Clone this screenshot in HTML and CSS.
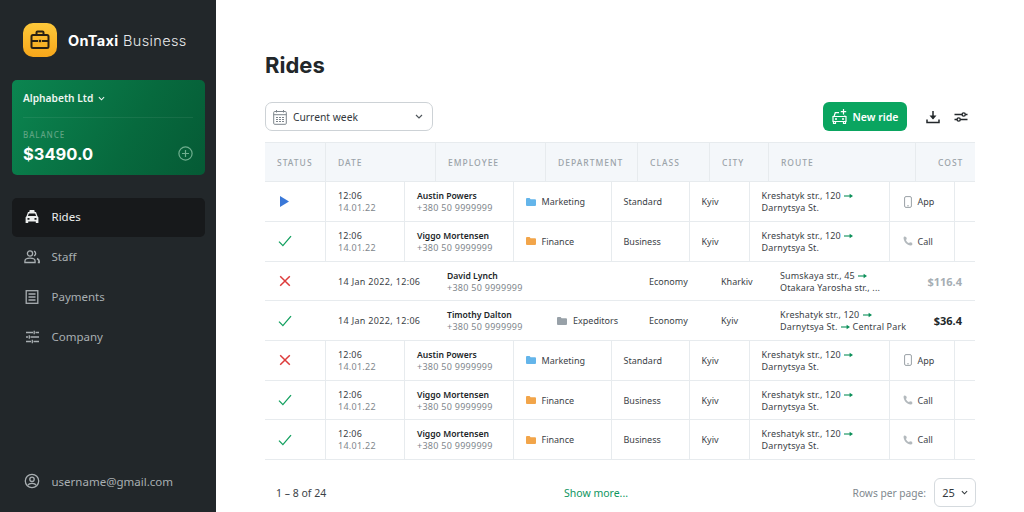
FILE: index.html
```html
<!DOCTYPE html>
<html lang="en">
<head>
<meta charset="utf-8">
<title>Rides</title>
<link rel="stylesheet" href="styles.css">
</head>
<body>
<svg class="defs" width="0" height="0" aria-hidden="true">
  <symbol id="folder" viewBox="0 0 10 8"><path d="M0 1a1 1 0 0 1 1-1h2.6l1 1.2H9a1 1 0 0 1 1 1V7a1 1 0 0 1-1 1H1a1 1 0 0 1-1-1z" fill="currentColor"/></symbol>
  <symbol id="check" viewBox="0 0 14 12"><path d="M1 6.600 4.900 10.600 13 1.200" fill="none" stroke="currentColor" stroke-width="1.300"/></symbol>
  <symbol id="cross" viewBox="0 0 12 12"><path d="M1.200 1.200 10.800 10.800M10.800 1.200 1.200 10.800" fill="none" stroke="currentColor" stroke-width="1.500"/></symbol>
  <symbol id="play" viewBox="0 0 9 11"><path d="M0 0 9 5.500 0 11z" fill="currentColor"/></symbol>
  <symbol id="arrow" viewBox="0 0 9 6"><path d="M0 3h7" stroke="currentColor" stroke-width="1.100"/><path d="M5.600 .8 9 3 5.600 5.200z" fill="currentColor"/></symbol>
  <symbol id="phone" viewBox="0 0 10 10"><path d="M1.400 .6 3.200 .9 3.800 3 2.900 3.900C3.500 5.300 4.700 6.500 6.100 7.100L7 6.200 9.100 6.800 9.400 8.600C9 9.300 8.300 9.500 7.600 9.400 4 8.900 1.100 6 .6 2.400.5 1.700.7 1 1.400 .6z" fill="currentColor"/></symbol>
  <symbol id="mobile" viewBox="0 0 8 12"><rect x=".6" y=".6" width="6.800" height="10.800" rx="1.400" fill="none" stroke="currentColor" stroke-width="1"/><path d="M3 9.800h2" stroke="currentColor" stroke-width=".8"/></symbol>
  <symbol id="chev" viewBox="0 0 8 5"><path d="M1 1 4 4 7 1" fill="none" stroke="currentColor" stroke-width="1.200"/></symbol>
</svg>

<div class="app">
  <aside class="sidebar">
    <div class="brand">
      <div class="brand-logo">
        <svg width="22" height="22" viewBox="0 0 22 22" fill="none" stroke="#2a2113" stroke-width="2"><path d="M7.500 6V3.600a1 1 0 0 1 1-1h5a1 1 0 0 1 1 1V6"/><rect x="2.500" y="6" width="17" height="13" rx="1.500"/><path d="M2.500 12H9M13 12h6.500"/><rect x="9.800" y="10.800" width="2.400" height="2.400" fill="#2a2113" stroke="none"/></svg>
      </div>
      <div class="brand-name"><b>OnTaxi</b> Business</div>
    </div>
    <div class="balance">
      <div class="company">Alphabeth Ltd <svg class="company-chev" width="7" height="5"><use href="#chev"/></svg></div>
      <div class="balance-label">BALANCE</div>
      <div class="balance-row">
        <div class="balance-sum">$3490.0</div>
        <svg width="15" height="15" viewBox="0 0 15 15" fill="none" stroke="#6fae8e" stroke-width="1.200"><circle cx="7.500" cy="7.500" r="6.600"/><path d="M7.500 4v7M4 7.500h7"/></svg>
      </div>
    </div>
    <nav class="nav">
      <a class="nav-item active">
        <svg class="nav-icon" viewBox="0 0 16 16"><path fill="currentColor" d="M5.700 1h4.600l.4 2H12l1.500 4.300.9 1V14h-2.600v-1.500H4.200V14H1.600V8.300l.9-1L4 3h1.300zM4.900 4.500 3.900 7h8.200l-1-2.500zM3.500 9v1.800h2V9zm7 0v1.800h2V9z"/></svg>
        Rides
      </a>
      <a class="nav-item">
        <svg class="nav-icon" viewBox="0 0 16 16" fill="none" stroke="currentColor" stroke-width="1.300"><circle cx="6" cy="4.500" r="2.600"/><path d="M.9 13.500v-1.300c0-1.900 2-3 5.100-3s5.100 1.100 5.100 3v1.300z"/><path d="M10 2.200a2.500 2.500 0 0 1 0 4.700"/><path d="M13 9.400c1.300.6 2.100 1.500 2.100 2.800v1.300h-1.300" stroke-width="1.700"/></svg>
        Staff
      </a>
      <a class="nav-item">
        <svg class="nav-icon" viewBox="0 0 16 16" fill="none" stroke="currentColor" stroke-width="1.300"><rect x="2.200" y="1.700" width="11.600" height="12.600"/><path d="M4.500 5h7M4.500 8h7M4.500 11h7"/></svg>
        Payments
      </a>
      <a class="nav-item">
        <svg class="nav-icon" viewBox="0 0 16 16" fill="none" stroke="currentColor" stroke-width="1.300"><path d="M2 3.500h7M11.500 3.500H15M2 8h2M6.500 8H15M2 12.500h5M9.500 12.500H15M10.200 1.800v3.500M5.300 6.200v3.600M8.300 10.700v3.600"/></svg>
        Company
      </a>
    </nav>
    <div class="user">
      <svg class="nav-icon" viewBox="0 0 16 16" fill="none" stroke="currentColor" stroke-width="1.300"><circle cx="8" cy="8" r="6.700"/><circle cx="8" cy="6.300" r="2.200"/><path d="M4 12.300c.5-1.500 2-2 4-2s3.500.5 4 2"/></svg>
      username@gmail.com
    </div>
  </aside>

  <main class="main">
    <h1 class="title">Rides</h1>
    <div class="toolbar">
      <div class="period">
        <svg class="period-icon" width="14" height="16" viewBox="0 0 14 16" fill="none" stroke="#7d858c" stroke-width="1"><rect x=".7" y="2.500" width="12.600" height="12.800" rx="1"/><path d="M.7 5.700h12.600M3.500 1v2.500M10.500 1v2.500M3 8.500h2M6 8.500h2M9 8.500h2M3 10.500h2M6 10.500h2M9 10.500h2M3 12.500h2M6 12.500h2M9 12.500h2"/></svg>
        <span class="period-text">Current week</span>
        <svg class="chev" width="8" height="5"><use href="#chev"/></svg>
      </div>
      <div class="actions">
        <button class="new-ride">
          <svg width="15" height="15" viewBox="0 0 15 15" fill="none" stroke="#fff" stroke-width="1.200"><path d="M11.500 0v5.500M8.800 2.700h5.400"/><path d="M7 3.700H3.300L2 7.500"/><path d="M12.800 6.500V7.500"/><path d="M1 7.500h13v5H1zM1.500 12.500v2h2v-2M11.500 12.500v2h2v-2"/><path d="M3 10h2M10 10h2" stroke-width="1.500"/></svg>
          New ride
        </button>
        <svg class="tool" width="14" height="14" viewBox="0 0 14 14" fill="none" stroke="#22272a" stroke-width="1.500"><path d="M7 1v7.500"/><path d="M3.500 5.500h7L7 9.500z" fill="#22272a" stroke="none"/><path d="M1 9.500v3h12v-3"/></svg>
        <svg class="tool" width="14" height="14" viewBox="0 0 14 14" fill="none" stroke="#22272a" stroke-width="1.400"><path d="M.5 4.500h7.500M11.500 4.500H13.500M.5 9.500h2.500M6.500 9.500H13.500"/><circle cx="9.700" cy="4.500" r="1.600"/><circle cx="4.700" cy="9.500" r="1.600"/></svg>
      </div>
    </div>

    <div class="table">
      <div class="thead">
        <div class="th">STATUS</div><div class="th">DATE</div><div class="th">EMPLOYEE</div><div class="th">DEPARTMENT</div><div class="th">CLASS</div><div class="th">CITY</div><div class="th">ROUTE</div><div class="th th-cost">COST</div>
      </div>

      <div class="row">
        <div class="td st"><svg class="i-play" width="9" height="11"><use href="#play"/></svg></div>
        <div class="td two"><span class="dark">12:06</span><span class="muted">14.01.22</span></div>
        <div class="td two"><b>Austin Powers</b><span class="muted">+380 50 9999999</span></div>
        <div class="td dept"><svg class="f-blue" width="10" height="8"><use href="#folder"/></svg>Marketing</div>
        <div class="td">Standard</div>
        <div class="td">Kyiv</div>
        <div class="td two route"><span>Kreshatyk str., 120 <svg class="arrow" width="9" height="6"><use href="#arrow"/></svg></span><span>Darnytsya St.</span></div>
        <div class="td src"><svg class="i-mobile" width="10" height="12"><use href="#mobile"/></svg>App</div>
        <div class="td"></div>
      </div>

      <div class="row">
        <div class="td st"><svg class="i-ok" width="14" height="12"><use href="#check"/></svg></div>
        <div class="td two"><span class="dark">12:06</span><span class="muted">14.01.22</span></div>
        <div class="td two"><b>Viggo Mortensen</b><span class="muted">+380 50 9999999</span></div>
        <div class="td dept"><svg class="f-orange" width="10" height="8"><use href="#folder"/></svg>Finance</div>
        <div class="td">Business</div>
        <div class="td">Kyiv</div>
        <div class="td two route"><span>Kreshatyk str., 120 <svg class="arrow" width="9" height="6"><use href="#arrow"/></svg></span><span>Darnytsya St.</span></div>
        <div class="td src"><svg class="i-phone" width="10" height="10"><use href="#phone"/></svg>Call</div>
        <div class="td"></div>
      </div>

      <div class="row wide">
        <div class="td st"><svg class="i-no" width="12" height="12"><use href="#cross"/></svg></div>
        <div class="td stamp">14 Jan 2022, 12:06</div>
        <div class="td two"><b>David Lynch</b><span class="muted">+380 50 9999999</span></div>
        <div class="td dept"></div>
        <div class="td">Economy</div>
        <div class="td">Kharkiv</div>
        <div class="td two route"><span>Sumskaya str., 45 <svg class="arrow" width="9" height="6"><use href="#arrow"/></svg></span><span>Otakara Yarosha str., ...</span></div>
        <div class="td cost cost-off">$116.4</div>
      </div>

      <div class="row wide">
        <div class="td st"><svg class="i-ok" width="14" height="12"><use href="#check"/></svg></div>
        <div class="td stamp">14 Jan 2022, 12:06</div>
        <div class="td two"><b>Timothy Dalton</b><span class="muted">+380 50 9999999</span></div>
        <div class="td dept"><svg class="f-gray" width="10" height="8"><use href="#folder"/></svg>Expeditors</div>
        <div class="td">Economy</div>
        <div class="td">Kyiv</div>
        <div class="td two route"><span>Kreshatyk str., 120 <svg class="arrow" width="9" height="6"><use href="#arrow"/></svg></span><span>Darnytsya St. <svg class="arrow" width="9" height="6"><use href="#arrow"/></svg> Central Park</span></div>
        <div class="td cost">$36.4</div>
      </div>

      <div class="row">
        <div class="td st"><svg class="i-no" width="12" height="12"><use href="#cross"/></svg></div>
        <div class="td two"><span class="dark">12:06</span><span class="muted">14.01.22</span></div>
        <div class="td two"><b>Austin Powers</b><span class="muted">+380 50 9999999</span></div>
        <div class="td dept"><svg class="f-blue" width="10" height="8"><use href="#folder"/></svg>Marketing</div>
        <div class="td">Standard</div>
        <div class="td">Kyiv</div>
        <div class="td two route"><span>Kreshatyk str., 120 <svg class="arrow" width="9" height="6"><use href="#arrow"/></svg></span><span>Darnytsya St.</span></div>
        <div class="td src"><svg class="i-mobile" width="10" height="12"><use href="#mobile"/></svg>App</div>
        <div class="td"></div>
      </div>

      <div class="row">
        <div class="td st"><svg class="i-ok" width="14" height="12"><use href="#check"/></svg></div>
        <div class="td two"><span class="dark">12:06</span><span class="muted">14.01.22</span></div>
        <div class="td two"><b>Viggo Mortensen</b><span class="muted">+380 50 9999999</span></div>
        <div class="td dept"><svg class="f-orange" width="10" height="8"><use href="#folder"/></svg>Finance</div>
        <div class="td">Business</div>
        <div class="td">Kyiv</div>
        <div class="td two route"><span>Kreshatyk str., 120 <svg class="arrow" width="9" height="6"><use href="#arrow"/></svg></span><span>Darnytsya St.</span></div>
        <div class="td src"><svg class="i-phone" width="10" height="10"><use href="#phone"/></svg>Call</div>
        <div class="td"></div>
      </div>

      <div class="row">
        <div class="td st"><svg class="i-ok" width="14" height="12"><use href="#check"/></svg></div>
        <div class="td two"><span class="dark">12:06</span><span class="muted">14.01.22</span></div>
        <div class="td two"><b>Viggo Mortensen</b><span class="muted">+380 50 9999999</span></div>
        <div class="td dept"><svg class="f-orange" width="10" height="8"><use href="#folder"/></svg>Finance</div>
        <div class="td">Business</div>
        <div class="td">Kyiv</div>
        <div class="td two route"><span>Kreshatyk str., 120 <svg class="arrow" width="9" height="6"><use href="#arrow"/></svg></span><span>Darnytsya St.</span></div>
        <div class="td src"><svg class="i-phone" width="10" height="10"><use href="#phone"/></svg>Call</div>
        <div class="td"></div>
      </div>
    </div>

    <div class="pager">
      <div class="pager-count">1 – 8 of 24</div>
      <a class="pager-more">Show more...</a>
      <div class="pager-size">
        <span class="pager-label">Rows per page:</span>
        <div class="pager-select">25 <svg width="7" height="5"><use href="#chev"/></svg></div>
      </div>
    </div>
  </main>
</div>
</body>
</html>
```
FILE: styles.css
```css
* { box-sizing: border-box; }
html, body { margin: 0; height: 100%; }
body { width: 1024px; height: 512px; overflow: hidden; background: #fff; font-family: "Noto Sans", sans-serif; color: #22272a; }
.defs { position: absolute; }
.app { display: flex; height: 512px; }

.sidebar { width: 216px; flex: none; background: #22272a; display: flex; flex-direction: column; padding: 23px 11px 23px 11.500px; }
.brand { display: flex; align-items: center; gap: 11px; padding-left: 11.500px; height: 34px; }
.brand-logo { width: 34px; height: 34px; border-radius: 10px; background: linear-gradient(180deg, #fdc83a, #f7a71b); display: flex; align-items: center; justify-content: center; }
.brand-name { font-family: Inter, sans-serif; font-size: 14.500px; font-weight: 300; letter-spacing: .35px; color: #e6e8e9; white-space: nowrap; }
.brand-name b { color: #fff; font-weight: 700; }

.balance { margin-top: 22.500px; height: 95px; border-radius: 5px; background: linear-gradient(120deg, #0b8550 0%, #076a3e 60%, #055a35 100%); padding: 0 12px 0 11.500px; }
.company { height: 38px; border-bottom: 1px solid rgba(255,255,255,.07); display: flex; align-items: center; gap: 5px; font-size: 10.200px; font-weight: 600; color: #eef5f1; }
.company-chev { color: #eef5f1; }
.balance-label { margin-top: 12px; font-size: 8px; letter-spacing: .9px; font-weight: 500; color: #5fa483; line-height: 10px; }
.balance-row { display: flex; justify-content: space-between; align-items: center; margin-top: 2px; }
.balance-sum { font-family: Inter, sans-serif; font-size: 16.500px; font-weight: 700; color: #fff; line-height: 24px; }

.nav { margin-top: 23.500px; display: flex; flex-direction: column; gap: 1px; }
.nav-item { height: 39px; display: flex; align-items: center; gap: 12px; padding: 0 0 2px 12px; border-radius: 5px; font-size: 11.500px; color: #a9afb2; }
.nav-item.active { background: #17191b; color: #eceeee; }
.nav-icon { width: 16px; height: 16px; flex: none; }
.user { margin-top: auto; display: flex; align-items: center; gap: 12px; padding-left: 12px; font-size: 11.500px; color: #a9afb2; }

.main { width: 759px; padding-left: 49px; display: flex; flex-direction: column; }
.title { margin: 50px 0 0; font-family: Inter, sans-serif; font-size: 22px; font-weight: 700; line-height: 30px; color: #22272a; }
.toolbar { margin-top: 22px; display: flex; justify-content: space-between; align-items: center; width: 710px; height: 29px; }
.period { width: 168px; height: 29px; border: 1px solid #cdd2d6; border-radius: 7px; display: flex; align-items: center; padding: 0 9px 0 7px; font-size: 10.300px; color: #33393d; }
.period-icon { flex: none; }
.period-text { margin-left: 6px; flex: 1; }
.chev { color: #50575c; }
.actions { display: flex; align-items: center; }
.new-ride { width: 84px; height: 29px; border: 0; border-radius: 6px; background: #0aa560; color: #fff; display: flex; align-items: center; justify-content: center; gap: 6px; font: 600 10.500px "Noto Sans", sans-serif; margin-right: 19px; padding: 0; }
.tool { margin-right: 14px; }
.tool:last-child { margin-right: 7px; }

.table { margin-top: 11px; width: 710px; overflow: hidden; }
.thead, .row { display: grid; height: 39.700px; border-bottom: 1px solid #e7ebee; align-items: stretch; width: 760px; }
.thead { grid-template-columns: 61px 110px 110px 92px 72px 59px 147px 58px 50px; height: 40.300px; background: #f4f7fa; font-size: 8.500px; letter-spacing: 1px; color: #9ba3a9; font-weight: 500; width: 710px; border-top: 1px solid #e7ebee; }
.th { display: flex; align-items: center; padding-left: 12px; border-right: 1px solid #e7ebee; }
.th-cost { border-right: 0; padding-left: 22px; }
.row { grid-template-columns: 61px 79px 108.500px 98px 78px 60px 140px 65px 60px; font-size: 9px; color: #3b4247; }
.td { display: flex; align-items: center; border-right: 1px solid #e7ebee; padding-left: 12px; white-space: nowrap; min-width: 0; }
.td.two { flex-direction: column; align-items: flex-start; justify-content: center; line-height: 12px; padding-top: 1px; }
.td.st { justify-content: center; padding-left: 0; padding-right: 21px; }
.td b { font-weight: 600; font-size: 8.600px; color: #22272a; }
.dark { color: #3b4247; letter-spacing: .2px; }
.muted { color: #7f878d; letter-spacing: .27px; }
.stamp { letter-spacing: .33px; }
.dept svg { margin-right: 6px; }
.src { padding-left: 13px; }
.src svg { margin-right: 5px; }
.i-mobile { color: #9aa1a6; }
.i-phone { color: #b3b9bd; }
.route span { letter-spacing: .15px; }
.arrow { color: #0a8f58; margin-left: 1px; }
.wide { grid-template-columns: 61px 109px 110px 92px 72px 59px 141px 1fr; width: 710px; }
.wide .td { border-right: 0; }
.wide .cost { justify-content: flex-end; padding: 0 13px 0 0; font-size: 11px; font-weight: 700; color: #22272a; }
.wide .cost-off { color: #a6aeb4; }

.i-play { color: #3a78d8; }
.i-ok { color: #12a05f; }
.i-no { color: #dd3b3b; }
.f-blue { color: #64b5ea; }
.f-orange { color: #f2a54a; }
.f-gray { color: #98a1a8; }

.pager { width: 711px; margin-top: 17.800px; height: 30px; display: flex; align-items: center; font-size: 10.500px; }
.pager-count { width: 299px; padding-left: 11px; color: #3b4247; }
.pager-more { color: #0f9560; }
.pager-size { margin-left: auto; display: flex; align-items: center; gap: 8px; }
.pager-label { color: #80888e; font-size: 10.200px; }
.pager-select { width: 42px; height: 29px; border: 1px solid #d5dade; border-radius: 6px; display: flex; align-items: center; justify-content: center; gap: 6px; font-size: 11px; color: #33393d; }
```
